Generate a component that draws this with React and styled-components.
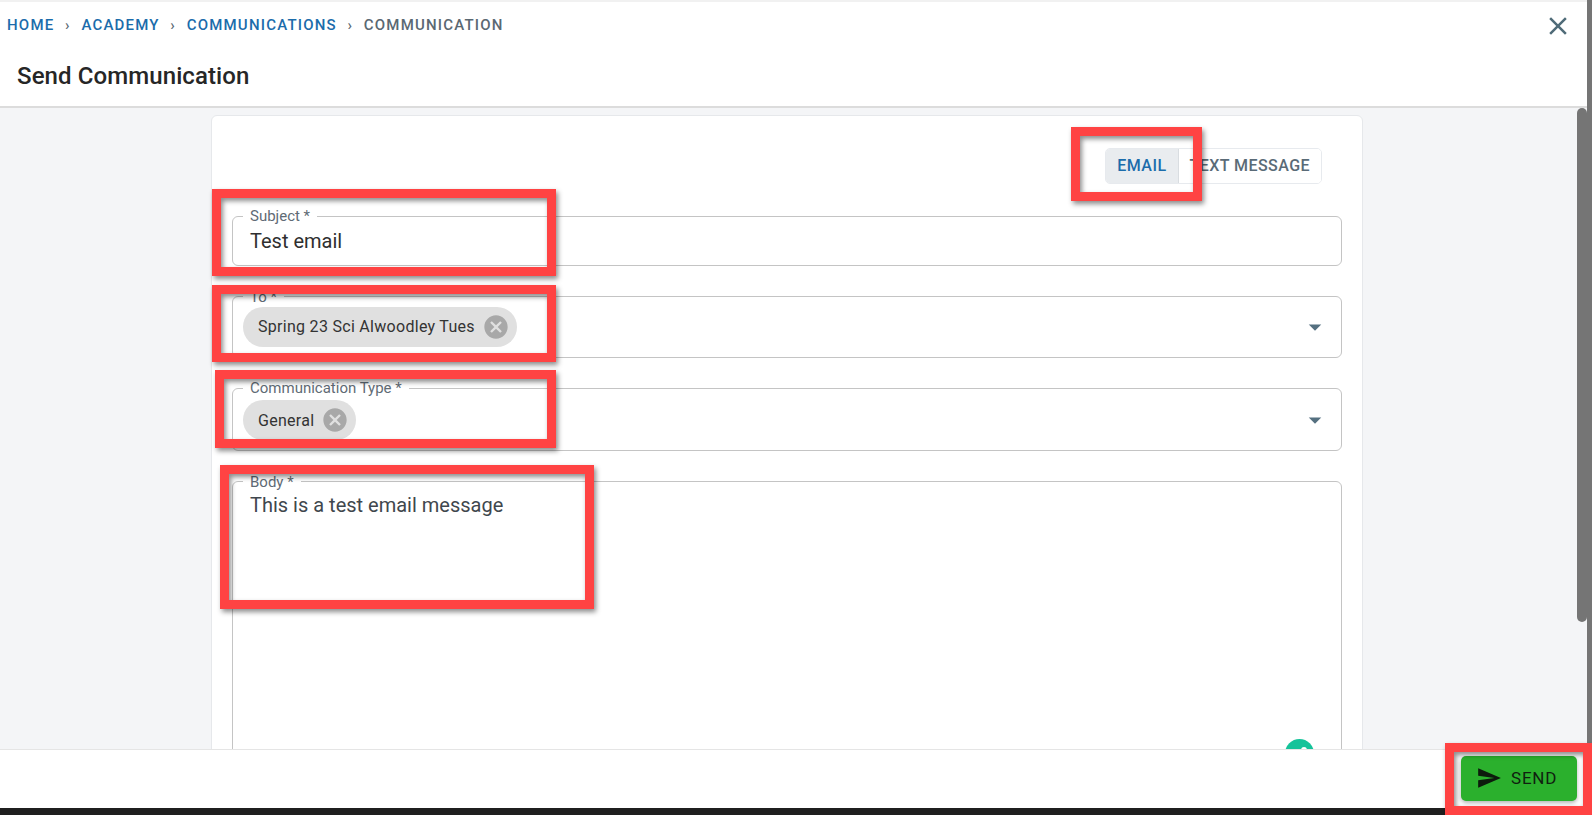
import { Fragment } from 'react'
import styled, { createGlobalStyle } from 'styled-components'

const GlobalStyle = createGlobalStyle`
    html, body {
        margin: 0;
        padding: 0;
        height: 100%;
        overflow: hidden;
    }
    body {
        font-family: Roboto, 'Liberation Sans', sans-serif;
        background: #ffffff;
    }
`

const Page = styled('div')`
    position: relative;
    display: flex;
    flex-direction: column;
    width: 100vw;
    height: 100vh;
    overflow: hidden;
    background: #1f1f1f;
`

const Shell = styled('div')`
    display: flex;
    flex-grow: 1;
    min-height: 0;
    background: #757575;
    padding-right: 5px;
`

const BottomEdge = styled('div')`
    height: 7px;
    flex-shrink: 0;
    background: #1f1f1f;
`

const Window = styled('div')`
    display: flex;
    flex-direction: column;
    flex-grow: 1;
    min-width: 0;
    background: #ffffff;
`

const Header = styled('header')`
    position: relative;
    display: flex;
    flex-direction: column;
    flex-shrink: 0;
    height: 108px;
    box-sizing: border-box;
    border-top: 2px solid #f1f1f1;
    border-bottom: 2px solid #dcdcdc;
    padding: 14px 0 0 7px;
`

const Crumbs = styled('nav')`
    display: flex;
    align-items: center;
    height: 17px;
    font-size: 15px;
    font-weight: 500;
    letter-spacing: 1.2px;
    text-transform: uppercase;
`

const Crumb = styled('span')`
    color: ${(p) => (p.$current ? '#5a6872' : '#1b6cab')};
`

const CrumbSep = styled('span')`
    display: flex;
    justify-content: center;
    width: 27px;
    color: #5a6872;
`

const Title = styled('h1')`
    margin: 28px 0 0 10px;
    font-size: 24px;
    line-height: 30px;
    font-weight: 500;
    letter-spacing: 0.1px;
    color: #262626;
`

const CloseButton = styled('button')`
    position: absolute;
    top: 9px;
    right: 14px;
    display: flex;
    padding: 0;
    border: none;
    background: none;
    color: #4f6b78;
`

const Scroller = styled('main')`
    position: relative;
    flex-grow: 1;
    min-height: 0;
    overflow: hidden;
    background: #f4f5f7;
    padding: 7px 15px 0 0;
`

const Thumb = styled('div')`
    position: absolute;
    top: 0;
    right: 0;
    width: 10px;
    height: 514px;
    border-radius: 5px;
    background: #757575;
`

const Card = styled('section')`
    display: flex;
    flex-direction: column;
    gap: 23.5px;
    box-sizing: border-box;
    width: 1152px;
    margin-left: 211px;
    padding: 32px 20px 40px;
    background: #ffffff;
    border: 1px solid #e6e8eb;
    border-radius: 6px;
`

const ToggleGroup = styled('div')`
    display: flex;
    align-self: flex-end;
    height: 36px;
    margin: 0 20px 1.5px 0;
    box-sizing: border-box;
    border: 1px solid #e7eaee;
    border-radius: 5px;
    overflow: hidden;
`

const ToggleItem = styled('button')`
    padding: 0 11px 2px;
    border: none;
    border-left: ${(p) => (p.$active ? 'none' : '1px solid #d9dde1')};
    background: ${(p) => (p.$active ? '#e9ecef' : '#ffffff')};
    color: ${(p) => (p.$active ? '#1b6cab' : '#5a6b77')};
    font-family: inherit;
    font-size: 16px;
    font-weight: 500;
    letter-spacing: 0.45px;
    text-transform: uppercase;
`

const Field = styled('fieldset')`
    position: relative;
    min-width: 0;
    margin: 0;
    padding: 0;
    border: 1px solid #c4c4c4;
    border-radius: 6px;
    height: ${(p) => (p.$height ? p.$height : 'auto')};
    box-sizing: border-box;
`

const Label = styled('legend')`
    margin-left: 10px;
    padding: 0 7px;
    font-size: 15px;
    line-height: 14px;
    color: #5f6b75;
`

const InputText = styled('div')`
    padding: ${(p) => (p.$muted ? '4px' : '6px')} 16px 12px 17px;
    font-size: 20px;
    line-height: 24px;
    color: ${(p) => (p.$muted ? '#3f474d' : '#2f2f2f')};
`

const SelectRow = styled('div')`
    display: flex;
    align-items: center;
    justify-content: space-between;
    padding: ${(p) => p.$top}px 11px 10px 10px;
`

const Chip = styled('span')`
    display: inline-flex;
    align-items: center;
    height: 40px;
    padding: 0 7px 0 15px;
    gap: 7px;
    border-radius: 20px;
    background: #e0e0e0;
    color: #333333;
    font-size: 16px;
    letter-spacing: 0.29px;
`

const ChipDelete = styled('svg')`
    width: 28px;
    height: 28px;
    fill: #a8a8a8;
`

const SelectArrow = styled('svg')`
    width: 30px;
    height: 30px;
    fill: #557080;
`

const GrammarlyDot = styled('span')`
    position: absolute;
    top: 250px;
    right: 27px;
    width: 29px;
    height: 29px;
    border-radius: 50%;
    background: #15c39a;
`

const GrammarlyMark = styled('span')`
    position: absolute;
    top: 8px;
    left: 16px;
    width: 6px;
    height: 6px;
    border-radius: 50%;
    background: #ffffff;
`

const Footer = styled('footer')`
    display: flex;
    justify-content: flex-end;
    align-items: center;
    flex-shrink: 0;
    height: 59px;
    box-sizing: border-box;
    padding: 0 10px 1px 0;
    background: #ffffff;
    border-top: 1px solid #e5e5e5;
`

const SendButton = styled('button')`
    display: flex;
    align-items: center;
    gap: 9px;
    box-sizing: border-box;
    width: 116px;
    height: 45px;
    padding: 0 0 2px 15px;
    border: none;
    border-radius: 5px;
    background: #2bb02d;
    color: #10200f;
    font-family: inherit;
    font-size: 17px;
    font-weight: 400;
    letter-spacing: 0.8px;
    box-shadow: 0 2px 4px rgba(0, 0, 0, 0.3);
`

const RedBox = styled('div')`
    position: absolute;
    left: ${(p) => p.$x}px;
    top: ${(p) => p.$y}px;
    width: ${(p) => p.$w}px;
    height: ${(p) => p.$h}px;
    box-sizing: border-box;
    border: 9px solid #ff4343;
    box-shadow: 2px 3px 5px rgba(0, 0, 0, 0.45),
        inset 2px 3px 5px rgba(0, 0, 0, 0.45);
`

const marks = [
    { x: 1071, y: 127, w: 131, h: 74 },
    { x: 212, y: 189, w: 344, h: 87 },
    { x: 212, y: 285, w: 344, h: 77 },
    { x: 215, y: 370, w: 341, h: 78 },
    { x: 220, y: 465, w: 374, h: 144 },
    { x: 1445, y: 743, w: 147, h: 72 },
]

const crumbs = ['Home', 'Academy', 'Communications']

const ChipClose = () => (
    <ChipDelete viewBox="0 0 24 24">
        <path d="M12 2C6.47 2 2 6.47 2 12s4.47 10 10 10 10-4.47 10-10S17.53 2 12 2zm5 13.59L15.59 17 12 13.41 8.41 17 7 15.59 10.59 12 7 8.41 8.41 7 12 10.59 15.59 7 17 8.41 13.41 12 17 15.59z" />
    </ChipDelete>
)

const Arrow = () => (
    <SelectArrow viewBox="0 0 24 24">
        <path d="m7 10 5 5 5-5z" />
    </SelectArrow>
)

const App = () => {
    return (
        <Page>
            <GlobalStyle />
            <Shell>
                <Window>
                    <Header>
                        <Crumbs>
                            {crumbs.map((c) => (
                                <Fragment key={c}>
                                    <Crumb>{c}</Crumb>
                                    <CrumbSep>›</CrumbSep>
                                </Fragment>
                            ))}
                            <Crumb $current>Communication</Crumb>
                        </Crumbs>
                        <Title>Send Communication</Title>
                        <CloseButton aria-label="Close">
                            <svg width="30" height="30" viewBox="0 0 24 24" fill="currentColor">
                                <path d="M19 6.41 17.59 5 12 10.59 6.41 5 5 6.41 10.59 12 5 17.59 6.41 19 12 13.41 17.59 19 19 17.59 13.41 12z" />
                            </svg>
                        </CloseButton>
                    </Header>
                    <Scroller>
                        <Card>
                            <ToggleGroup>
                                <ToggleItem $active>Email</ToggleItem>
                                <ToggleItem>Text Message</ToggleItem>
                            </ToggleGroup>
                            <Field>
                                <Label>Subject *</Label>
                                <InputText>Test email</InputText>
                            </Field>
                            <Field>
                                <Label>To *</Label>
                                <SelectRow $top={3}>
                                    <Chip>
                                        Spring 23 Sci Alwoodley Tues
                                        <ChipClose />
                                    </Chip>
                                    <Arrow />
                                </SelectRow>
                            </Field>
                            <Field>
                                <Label>Communication Type *</Label>
                                <SelectRow $top={5}>
                                    <Chip>
                                        General
                                        <ChipClose />
                                    </Chip>
                                    <Arrow />
                                </SelectRow>
                            </Field>
                            <Field $height="420px">
                                <Label>Body *</Label>
                                <InputText $muted>This is a test email message</InputText>
                                <GrammarlyDot>
                                    <GrammarlyMark />
                                </GrammarlyDot>
                            </Field>
                        </Card>
                        <Thumb />
                    </Scroller>
                    <Footer>
                        <SendButton>
                            <svg width="26" height="26" viewBox="0 0 24 24" fill="#0d1a0d">
                                <path d="M2.01 21 23 12 2.01 3 2 10l15 2-15 2z" />
                            </svg>
                            SEND
                        </SendButton>
                    </Footer>
                </Window>
            </Shell>
            <BottomEdge />
            {marks.map((m) => (
                <RedBox key={m.x + '-' + m.y} $x={m.x} $y={m.y} $w={m.w} $h={m.h} />
            ))}
        </Page>
    )
}

export default App
